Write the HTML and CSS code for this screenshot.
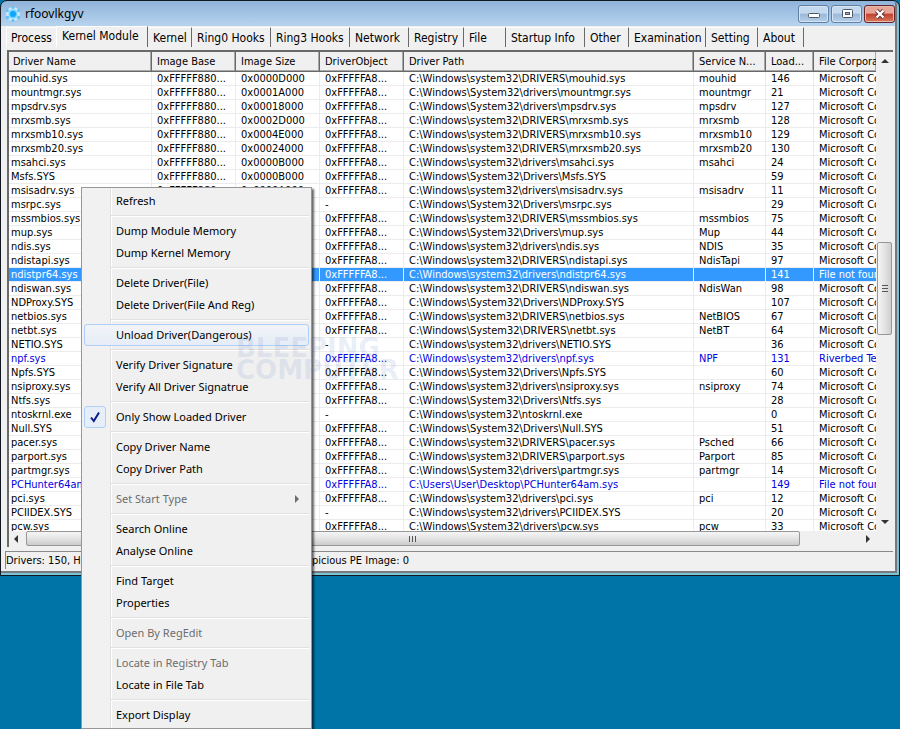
FILE: index.html
```
<!DOCTYPE html>
<html lang="en">
<head>
<meta charset="utf-8">
<title>rfoovlkgyv</title>
<link rel="stylesheet" href="styles.css">
</head>
<body>
<main class="window">
  <header class="titlebar">
    <svg class="app-icon" viewBox="0 0 16 16" aria-hidden="true"><circle cx="8" cy="8" r="7" fill="#c9e9fc"/><g fill="#5fc1f7"><circle cx="8" cy="1.5" r="1.5"/><circle cx="2.4" cy="4.5" r="1.6"/><circle cx="13.6" cy="4.5" r="1.6"/><circle cx="2.4" cy="11.5" r="1.8"/><circle cx="13.6" cy="11.5" r="1.8"/><circle cx="8" cy="14.5" r="1.5"/></g><circle cx="8" cy="8" r="4.5" fill="#71d0ff"/><circle cx="8" cy="8" r="3" fill="#10a7fa"/></svg>
    <h1 class="title">rfoovlkgyv</h1>
    <div class="controls">
      <button class="control" aria-label="Minimize"><svg viewBox="0 0 14 12"><rect x="1.500" y="5.500" width="11" height="4" rx="1" fill="#fff" stroke="#4c5868"/></svg></button>
      <button class="control" aria-label="Maximize"><svg viewBox="0 0 14 12"><rect x="2.500" y="1.500" width="10" height="8" rx="1" fill="#fff" stroke="#4c5868"/><rect x="5.500" y="4.500" width="4" height="2" fill="#9db4d0" stroke="#4c5868"/></svg></button>
      <button class="control close" aria-label="Close"><svg viewBox="0 0 14 12"><path d="M3.500 2.500 10.500 9.500M10.500 2.500 3.500 9.500" stroke="#5a2c30" stroke-width="4"/><path d="M3.500 2.500 10.500 9.500M10.500 2.500 3.500 9.500" stroke="#fff" stroke-width="2.400"/></svg></button>
    </div>
  </header>
  <nav class="tabs">
    <button class="tab">Process</button><button class="tab selected">Kernel Module</button><button class="tab">Kernel</button><button class="tab">Ring0 Hooks</button><button class="tab">Ring3 Hooks</button><button class="tab">Network</button><button class="tab">Registry</button><button class="tab">File</button><button class="tab">Startup Info</button><button class="tab">Other</button><button class="tab">Examination</button><button class="tab">Setting</button><button class="tab">About</button>
  </nav>
  <section class="list">
    <div class="table-area">
    <table class="drivers">
      <colgroup><col class="c-name"><col class="c-base"><col class="c-base"><col class="c-base"><col class="c-path"><col class="c-service"><col class="c-load"><col></colgroup>
      <thead><tr><th>Driver Name<th>Image Base<th>Image Size<th>DriverObject<th>Driver Path<th>Service N...<th>Load...<th>File Corporation</tr></thead>
      <tbody>
      <tr><td>mouhid.sys<td>0xFFFFF880...<td>0x0000D000<td>0xFFFFFA8...<td>C:\Windows\system32\DRIVERS\mouhid.sys<td>mouhid<td>146<td>Microsoft Corporation</tr>
      <tr><td>mountmgr.sys<td>0xFFFFF880...<td>0x0001A000<td>0xFFFFFA8...<td>C:\Windows\System32\drivers\mountmgr.sys<td>mountmgr<td>21<td>Microsoft Corporation</tr>
      <tr><td>mpsdrv.sys<td>0xFFFFF880...<td>0x00018000<td>0xFFFFFA8...<td>C:\Windows\System32\drivers\mpsdrv.sys<td>mpsdrv<td>127<td>Microsoft Corporation</tr>
      <tr><td>mrxsmb.sys<td>0xFFFFF880...<td>0x0002D000<td>0xFFFFFA8...<td>C:\Windows\system32\DRIVERS\mrxsmb.sys<td>mrxsmb<td>128<td>Microsoft Corporation</tr>
      <tr><td>mrxsmb10.sys<td>0xFFFFF880...<td>0x0004E000<td>0xFFFFFA8...<td>C:\Windows\system32\DRIVERS\mrxsmb10.sys<td>mrxsmb10<td>129<td>Microsoft Corporation</tr>
      <tr><td>mrxsmb20.sys<td>0xFFFFF880...<td>0x00024000<td>0xFFFFFA8...<td>C:\Windows\system32\DRIVERS\mrxsmb20.sys<td>mrxsmb20<td>130<td>Microsoft Corporation</tr>
      <tr><td>msahci.sys<td>0xFFFFF880...<td>0x0000B000<td>0xFFFFFA8...<td>C:\Windows\system32\drivers\msahci.sys<td>msahci<td>24<td>Microsoft Corporation</tr>
      <tr><td>Msfs.SYS<td>0xFFFFF880...<td>0x0000B000<td>0xFFFFFA8...<td>C:\Windows\System32\Drivers\Msfs.SYS<td><td>59<td>Microsoft Corporation</tr>
      <tr><td>msisadrv.sys<td>0xFFFFF880...<td>0x0000A000<td>0xFFFFFA8...<td>C:\Windows\system32\drivers\msisadrv.sys<td>msisadrv<td>11<td>Microsoft Corporation</tr>
      <tr><td>msrpc.sys<td><td><td>-<td>C:\Windows\System32\Drivers\msrpc.sys<td><td>29<td>Microsoft Corporation</tr>
      <tr><td>mssmbios.sys<td><td><td>0xFFFFFA8...<td>C:\Windows\system32\DRIVERS\mssmbios.sys<td>mssmbios<td>75<td>Microsoft Corporation</tr>
      <tr><td>mup.sys<td><td><td>0xFFFFFA8...<td>C:\Windows\System32\Drivers\mup.sys<td>Mup<td>44<td>Microsoft Corporation</tr>
      <tr><td>ndis.sys<td><td><td>0xFFFFFA8...<td>C:\Windows\system32\drivers\ndis.sys<td>NDIS<td>35<td>Microsoft Corporation</tr>
      <tr><td>ndistapi.sys<td><td><td>0xFFFFFA8...<td>C:\Windows\system32\DRIVERS\ndistapi.sys<td>NdisTapi<td>97<td>Microsoft Corporation</tr>
      <tr class="current"><td>ndistpr64.sys<td><td><td>0xFFFFFA8...<td>C:\Windows\system32\drivers\ndistpr64.sys<td><td>141<td>File not found</tr>
      <tr><td>ndiswan.sys<td><td><td>0xFFFFFA8...<td>C:\Windows\system32\DRIVERS\ndiswan.sys<td>NdisWan<td>98<td>Microsoft Corporation</tr>
      <tr><td>NDProxy.SYS<td><td><td>0xFFFFFA8...<td>C:\Windows\System32\Drivers\NDProxy.SYS<td><td>107<td>Microsoft Corporation</tr>
      <tr><td>netbios.sys<td><td><td>0xFFFFFA8...<td>C:\Windows\system32\DRIVERS\netbios.sys<td>NetBIOS<td>67<td>Microsoft Corporation</tr>
      <tr><td>netbt.sys<td><td><td>0xFFFFFA8...<td>C:\Windows\System32\DRIVERS\netbt.sys<td>NetBT<td>64<td>Microsoft Corporation</tr>
      <tr><td>NETIO.SYS<td><td><td>-<td>C:\Windows\system32\drivers\NETIO.SYS<td><td>36<td>Microsoft Corporation</tr>
      <tr class="foreign"><td>npf.sys<td><td><td>0xFFFFFA8...<td>C:\Windows\system32\drivers\npf.sys<td>NPF<td>131<td>Riverbed Technology</tr>
      <tr><td>Npfs.SYS<td><td><td>0xFFFFFA8...<td>C:\Windows\System32\Drivers\Npfs.SYS<td><td>60<td>Microsoft Corporation</tr>
      <tr><td>nsiproxy.sys<td><td><td>0xFFFFFA8...<td>C:\Windows\system32\drivers\nsiproxy.sys<td>nsiproxy<td>74<td>Microsoft Corporation</tr>
      <tr><td>Ntfs.sys<td><td><td>0xFFFFFA8...<td>C:\Windows\System32\Drivers\Ntfs.sys<td><td>28<td>Microsoft Corporation</tr>
      <tr><td>ntoskrnl.exe<td><td><td>-<td>C:\Windows\system32\ntoskrnl.exe<td><td>0<td>Microsoft Corporation</tr>
      <tr><td>Null.SYS<td><td><td>0xFFFFFA8...<td>C:\Windows\System32\Drivers\Null.SYS<td><td>51<td>Microsoft Corporation</tr>
      <tr><td>pacer.sys<td><td><td>0xFFFFFA8...<td>C:\Windows\system32\DRIVERS\pacer.sys<td>Psched<td>66<td>Microsoft Corporation</tr>
      <tr><td>parport.sys<td><td><td>0xFFFFFA8...<td>C:\Windows\system32\DRIVERS\parport.sys<td>Parport<td>85<td>Microsoft Corporation</tr>
      <tr><td>partmgr.sys<td><td><td>0xFFFFFA8...<td>C:\Windows\System32\drivers\partmgr.sys<td>partmgr<td>14<td>Microsoft Corporation</tr>
      <tr class="foreign"><td>PCHunter64am.sys<td><td><td>0xFFFFFA8...<td>C:\Users\User\Desktop\PCHunter64am.sys<td><td>149<td>File not found</tr>
      <tr><td>pci.sys<td><td><td>0xFFFFFA8...<td>C:\Windows\system32\drivers\pci.sys<td>pci<td>12<td>Microsoft Corporation</tr>
      <tr><td>PCIIDEX.SYS<td><td><td>-<td>C:\Windows\system32\drivers\PCIIDEX.SYS<td><td>20<td>Microsoft Corporation</tr>
      <tr><td>pcw.sys<td><td><td>0xFFFFFA8...<td>C:\Windows\System32\drivers\pcw.sys<td>pcw<td>33<td>Microsoft Corporation</tr>
      </tbody>
    </table>
    </div>
    <div class="vscroll">
      <svg class="arrow" viewBox="0 0 8 8"><path d="M0 6 4 2 8 6z"/></svg>
      <div class="vtrack"><div class="vthumb"><svg viewBox="0 0 8 8"><path d="M1 0h6v1H1zM1 3h6v1H1zM1 6h6v1H1z"/></svg></div></div>
      <svg class="arrow" viewBox="0 0 8 8"><path d="M0 2 4 6 8 2z"/></svg>
    </div>
    <div class="hscroll">
      <svg class="arrow" viewBox="0 0 8 8"><path d="M6 0 2 4 6 8z"/></svg>
      <div class="htrack"><div class="hthumb"><svg viewBox="0 0 8 8"><path d="M0 1h1v6H0zM3 1h1v6H3zM6 1h1v6H6z"/></svg></div></div>
      <svg class="arrow" viewBox="0 0 8 8"><path d="M2 0 6 4 2 8z"/></svg>
    </div>
  </section>
  <footer class="status"><span class="status-left">Drivers: 150, Hidden: 0</span><span>picious PE Image: 0</span></footer>
</main>
<div class="menu" role="menu">
  <button class="item">Refresh</button>
  <hr>
  <button class="item">Dump Module Memory</button>
  <button class="item">Dump Kernel Memory</button>
  <hr>
  <button class="item">Delete Driver(File)</button>
  <button class="item">Delete Driver(File And Reg)</button>
  <hr>
  <button class="item active">Unload Driver(Dangerous)</button>
  <hr>
  <button class="item">Verify Driver Signature</button>
  <button class="item">Verify All Driver Signatrue</button>
  <hr>
  <button class="item"><span class="check"><svg viewBox="0 0 12 12"><path d="M2 6.500 4.800 10 10 1.500" fill="none" stroke="#0b1c8c" stroke-width="2"/></svg></span>Only Show Loaded Driver</button>
  <hr>
  <button class="item">Copy Driver Name</button>
  <button class="item">Copy Driver Path</button>
  <hr>
  <button class="item" disabled>Set Start Type<svg class="submenu" viewBox="0 0 8 8"><path d="M2 0 6 4 2 8z" fill="#6d6d6d"/></svg></button>
  <hr>
  <button class="item">Search Online</button>
  <button class="item">Analyse Online</button>
  <hr>
  <button class="item">Find Target</button>
  <button class="item">Properties</button>
  <hr>
  <button class="item" disabled>Open By RegEdit</button>
  <hr>
  <button class="item" disabled>Locate in Registry Tab</button>
  <button class="item">Locate in File Tab</button>
  <hr>
  <button class="item">Export Display</button>
</div>
<div class="watermark">BLEEPING<br>COMPUTER</div>
</body>
</html>
```
FILE: styles.css
```
* { box-sizing: border-box; }
body {
  margin: 0;
  height: 100vh;
  overflow: hidden;
  position: relative;
  background: #0074a6;
  color: #000;
  font: 11px/14px "DejaVu Sans Condensed", "Noto Sans", sans-serif;
}
button { font: inherit; color: inherit; padding: 0; margin: 0; border: 0; background: none; }
.window {
  display: flex;
  flex-direction: column;
  height: 79vh;
  padding: 1px 2px 2px 1px;
  background: linear-gradient(#8fb4da, #b7d3ee 25px, #f0f0f0 25px);
  border: 1px solid #111820;
  border-radius: 7px 7px 0 0;
  box-shadow: inset -2px -2px #7cc3d8, inset -4px -4px #777b80;
}
.titlebar { display: flex; align-items: center; height: 24px; padding: 0 2px 0 3px; flex: none; }
.app-icon { width: 16px; height: 16px; }
.title { margin: 0 0 0 4px; flex: 1; font: 12px/16px "Noto Sans", sans-serif; }
.controls { display: flex; gap: 2px; }
.control {
  display: grid; place-items: center;
  width: 31px; height: 18px;
  border: 1px solid #5f7fa5;
  border-radius: 3px;
  background: linear-gradient(#c5d9ee 45%, #9bb8d8 50%, #b5cfea);
  box-shadow: inset 0 0 0 1px #d6e5f4;
}
.control svg { width: 14px; height: 12px; }
.close { border-color: #64242a; background: linear-gradient(#e5a597 45%, #c2402d 50%, #d67a5c); box-shadow: inset 0 0 0 1px #e9b8ac; }
.tabs {
  display: grid;
  grid-template-columns: 50px 92px 44px 79px 79px 59px 55px 42px 79px 44px 77px 52px 46px;
  align-items: end;
  height: 21px;
  margin-left: 4px;
  flex: none;
  font: 12px/18px "DejaVu Sans Condensed", "Noto Sans", sans-serif;
}
.tab { height: 20px; padding-left: 5px; text-align: left; white-space: nowrap; border-right: 1px solid #696969; border-top: 1px solid #fff; }
.tab:first-child { padding-left: 4px; border-right: 0; border-left: 1px solid #fff; }
.selected { height: 21px; padding-bottom: 3px; border-left: 1px solid #fff; }
.list {
  display: grid;
  grid-template: minmax(0, 1fr) 16px / minmax(0, 1fr) 17px;
  flex: 1;
  min-height: 0;
  margin: 3px 4px 0 5px;
  border: 1px solid #696969;
  border-width: 2px 0 0 2px;
  background: #f0f0f0;
}
.table-area { overflow: hidden; background: #fff; }
.drivers { width: 100%; table-layout: fixed; border-collapse: separate; border-spacing: 0; }
.c-name { width: 143px; } .c-base { width: 84px; } .c-path { width: 290px; } .c-service { width: 72px; } .c-load { width: 48px; }
th, td { padding: 0 0 0 5px; overflow: hidden; white-space: nowrap; text-align: left; font-weight: 400; }
th { height: 20px; padding-top: 1px; background: #f0f0f0; border-right: 1px solid #696969; border-bottom: 1px solid #696969; box-shadow: inset -1px -1px #a8a8a8; }
td { height: 14px; line-height: 13px; border-right: 1px solid #ececec; border-bottom: 1px solid #ececec; }
td:first-child { padding-left: 2px; }
th:first-child { padding-left: 4px; }
th:last-child, td:last-child { border-right: 0; }
.current td { color: #fff; background: #3399ff; }
.foreign td { color: #0000e0; }
.arrow { width: 8px; height: 8px; fill: #333; flex: none; }
.vscroll { display: flex; flex-direction: column; align-items: center; padding: 5px 0 5px; }
.vtrack { flex: 1; width: 15px; display: flex; flex-direction: column; padding-top: 177px; }
.vthumb { display: grid; place-items: center; height: 93px; border: 1px solid #979797; border-radius: 2px; background: linear-gradient(90deg, #f5f5f5, #e4e4e4 50%, #cfcfcf); }
.vthumb svg, .hthumb svg { width: 8px; height: 8px; fill: #555; }
.hscroll { display: flex; align-items: center; gap: 6px; padding: 0 4px 0 3px; }
.htrack { flex: 1; }
.hthumb { display: grid; place-items: center; width: 93%; height: 15px; border: 1px solid #979797; border-radius: 2px; background: linear-gradient(#f5f5f5, #e4e4e4 50%, #cbcbcb); }
.status { display: flex; height: 18px; margin: 4px 4px 4px 3px; padding-top: 2px; border-top: 1px solid #898989; border-left: 1px solid #898989; flex: none; }
.status-left { width: 306px; }
.menu {
  position: absolute;
  left: 81px; top: 187px;
  width: 231px;
  padding: 2px;
  border: 1px solid #979797;
  background: linear-gradient(90deg, #f1f1f1 28px, #e0e0e0 28px, #e0e0e0 29px, #fff 29px, #fff 30px, #f0f0f0 30px);
  box-shadow: 2px 2px 2px #0009;
  font: 11px/20px "Noto Sans", sans-serif;
}
.item { display: flex; align-items: center; position: relative; width: 100%; height: 22px; padding-left: 31px; border: 1px solid transparent; border-radius: 3px; }
.item:disabled { color: #6d6d6d; }
.active { border-color: #aecff7; background: linear-gradient(#f2f4f8, #e6edf7); }
.menu hr { height: 2px; margin: 3px 0 3px 27px; border: 0; border-top: 1px solid #e0e0e0; border-bottom: 1px solid #fff; }
.check { position: absolute; left: -1px; top: -1px; display: grid; place-items: center; width: 22px; height: 22px; border: 1px solid #aecff7; border-radius: 3px; background: #e6eff9; }
.check svg { width: 12px; height: 12px; }
.submenu { width: 8px; height: 8px; margin: 0 7px 0 auto; }
.watermark { position: absolute; left: 236px; top: 337px; color: #5a78be22; font: bold 26px/22px "DejaVu Sans", sans-serif; pointer-events: none; }
```
